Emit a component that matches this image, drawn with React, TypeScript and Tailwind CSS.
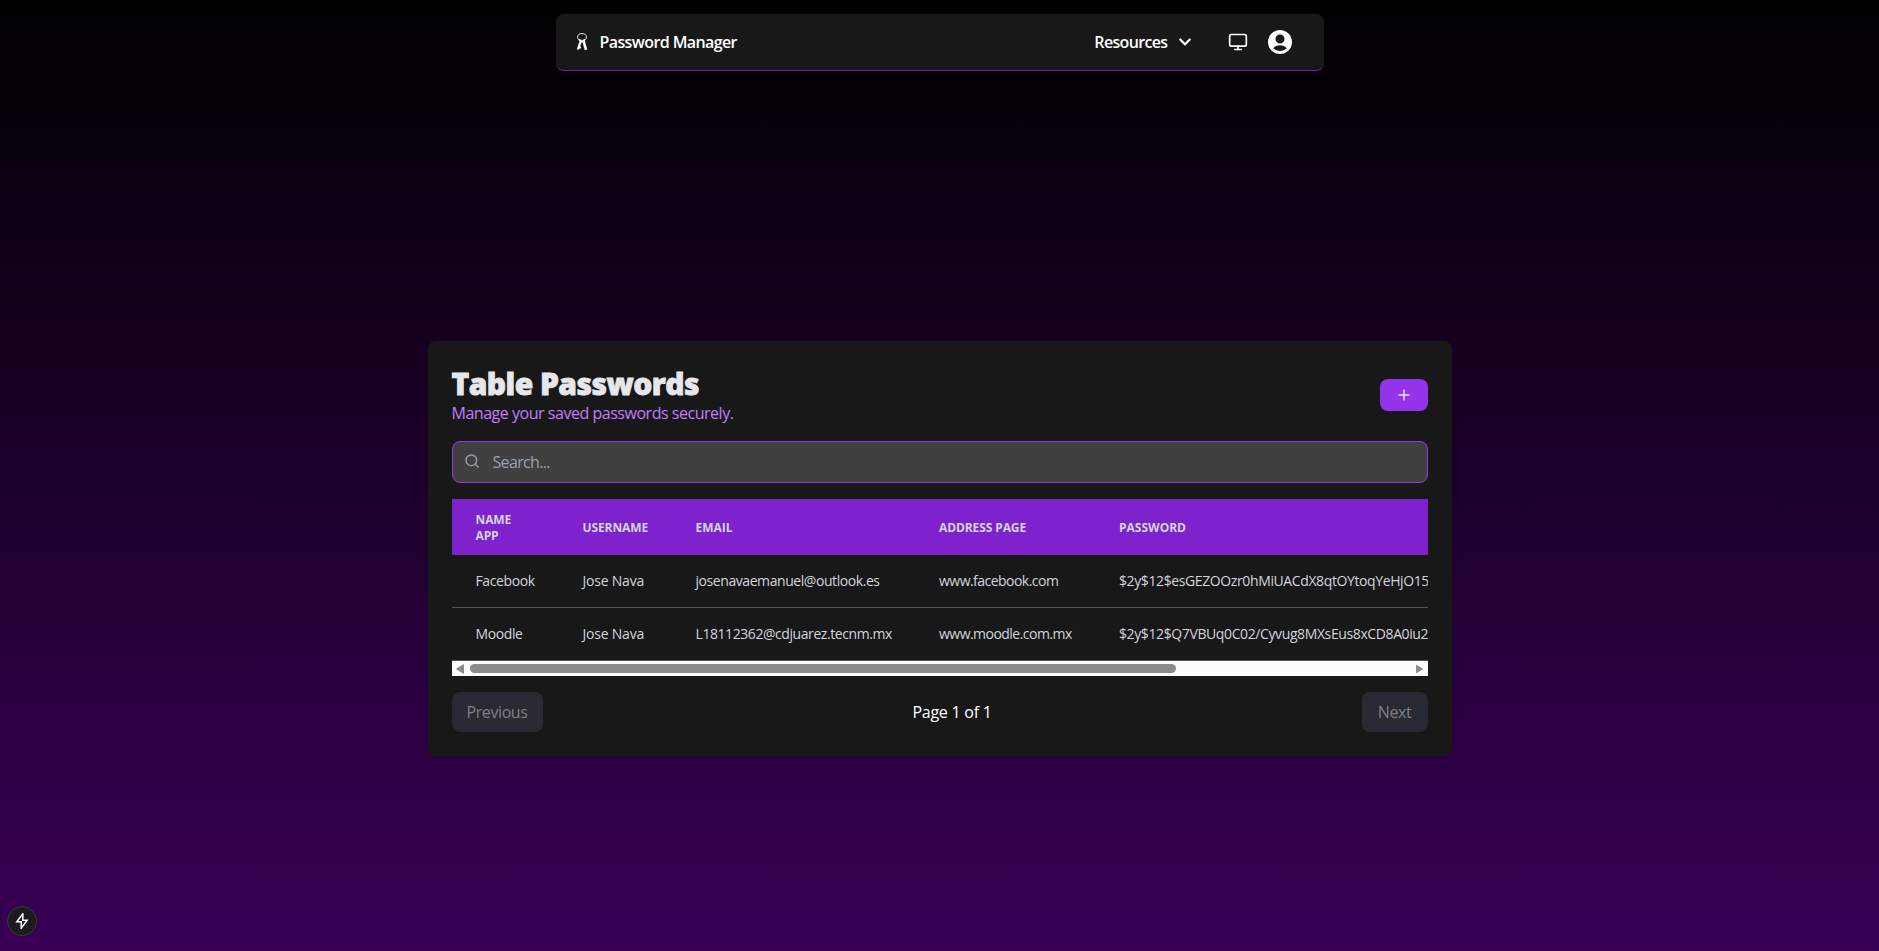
import { Monitor, Search } from "lucide-react";
import { FaChevronDown } from "react-icons/fa";

const columns = [
  { label: "NAME APP", width: "w-[107px]", tracking: "tracking-[-0.1px]" },
  { label: "USERNAME", width: "w-[113px]", tracking: "tracking-[-0.1px]" },
  { label: "EMAIL", width: "w-[243.500px]", tracking: "tracking-[0px]" },
  { label: "ADDRESS PAGE", width: "w-[180px]", tracking: "tracking-[-0.1px]" },
  { label: "PASSWORD", width: "w-[700px]", tracking: "tracking-[0px]" },
];

const rows = [
  ["Facebook", "Jose Nava", "josenavaemanuel@outlook.es", "www.facebook.com", "$2y$12$esGEZOOzr0hMiUACdX8qtOYtoqYeHjO15"],
  ["Moodle", "Jose Nava", "L18112362@cdjuarez.tecnm.mx", "www.moodle.com.mx", "$2y$12$Q7VBUq0C02/Cyvug8MXsEus8xCD8A0iu2"],
];

const cellTracking = [
  "tracking-[-0.4px]",
  "tracking-[-0.22px]",
  "tracking-[-0.43px]",
  "tracking-[-0.53px]",
  "tracking-[-0.39px]",
];

function KeysIcon() {
  return (
    <svg viewBox="0 0 12 18" className="h-[18px] w-3 fill-none stroke-white">
      <ellipse cx="6" cy="4" rx="4.400" ry="3.400" strokeWidth="0.900" />
      <path d="M4.800 8.200 1.800 16.500M3 12.800l1.300 2.600" strokeWidth="2.200" />
      <path d="M7.600 8.200 10 16.800" strokeWidth="2.600" />
      <path d="M2.800 6.300l3.600 2.900M9 6.300l-3.200 2.900" strokeWidth="1.600" />
    </svg>
  );
}

function Navbar() {
  return (
    <nav className="flex h-[57px] w-[768px] shrink-0 items-center rounded-lg border-b border-[#6b21a8] bg-[#181818] pr-8 pl-5 text-white">
      <KeysIcon />
      <span className="ml-3 text-[16px] font-semibold tracking-[-0.6px]">Password Manager</span>
      <span className="ml-auto text-[16px] font-semibold tracking-[-0.65px]">Resources</span>
      <FaChevronDown className="ml-[10px] size-[14px]" />
      <Monitor className="ml-[36px] size-5" strokeWidth={2} />
      <svg viewBox="0 0 24 24" className="ml-[20px] size-6" fill="currentColor">
        <path fillRule="evenodd" d="M12 0a12 12 0 1 0 0 24 12 12 0 0 0 0-24Zm0 4.500a4.500 4.500 0 1 1 0 9 4.500 4.500 0 0 1 0-9Zm-6.800 13.800c1.500-2 4.100-3.100 6.800-3.100s5.300 1.100 6.800 3.100A9 9 0 0 1 12 21a9 9 0 0 1-6.800-2.700Z" />
      </svg>
    </nav>
  );
}

function PasswordTable() {
  return (
    <div className="mt-4 w-full overflow-hidden">
      <div className="flex h-14 w-max items-center bg-[#7e22ce] pt-px text-[12px] leading-4 font-bold text-gray-300">
        {columns.map((c) => (
          <div key={c.label} className={`shrink-0 pr-12 pl-6 ${c.width} ${c.tracking}`}>
            {c.label}
          </div>
        ))}
      </div>
      {rows.map((row) => (
        <div key={row[0]} className="flex h-[53px] w-max items-center border-b border-[#525252] text-[14px] leading-5 text-gray-300">
          {row.map((cell, i) => (
            <div key={i} className={`shrink-0 pl-6 whitespace-nowrap ${cellTracking[i]} ${columns[i].width}`}>
              {cell}
            </div>
          ))}
        </div>
      ))}
      <div className="flex h-[15px] items-center bg-[#fcfcfc] px-1">
        <svg viewBox="0 0 8 10" className="h-[10px] w-2 fill-[#8b8b8b]">
          <path d="M7 0.500Q8 0 8 1V9Q8 10 7 9.500L0.500 5.600Q0 5 0.500 4.400Z" />
        </svg>
        <div className="ml-[6px] h-[9px] w-[706px] rounded-full bg-[#8b8b8b]" />
        <svg viewBox="0 0 8 10" className="mr-px ml-auto h-[10px] w-[7px] fill-[#8b8b8b]">
          <path d="M1 0.500Q0 0 0 1V9Q0 10 1 9.500L7.500 5.600Q8 5 7.500 4.400Z" />
        </svg>
      </div>
    </div>
  );
}

export default function App() {
  return (
    <div className="relative flex h-[951px] w-full flex-col items-center overflow-hidden bg-linear-to-b/srgb from-black to-[#390056] pt-[14px] font-['Open_Sans',sans-serif]">
      <Navbar />
      <main className="mt-[270px] flex h-[415px] w-[1024px] flex-col rounded-lg bg-[#181818] p-6 shadow-lg">
        <header className="mb-4 flex h-[60px] items-center justify-between">
          <div>
            <h1 className="pt-px text-[30px] leading-[35px] font-extrabold tracking-[-0.55px] text-gray-200 [-webkit-text-stroke:0.8px_#e5e7eb]">Table Passwords</h1>
            <p className="text-[16px] leading-6 tracking-[-0.47px] text-purple-400">Manage your saved passwords securely.</p>
          </div>
          <button className="flex h-8 w-12 items-center justify-center rounded-lg bg-[#9333ea]">
            <svg viewBox="0 0 12 12" className="size-3 stroke-gray-200" strokeWidth="1.500">
              <path d="M6 0.500v11M0.500 6h11" />
            </svg>
          </button>
        </header>
        <div className="flex h-[42px] shrink-0 items-center rounded-lg border border-[#9333ea] bg-[#404040] pl-[11px] text-gray-400">
          <Search className="mb-[3px] size-4" strokeWidth={2} />
          <span className="ml-[13px] text-[16px] tracking-[-0.65px]">Search...</span>
        </div>
        <PasswordTable />
        <footer className="mt-4 flex h-10 items-center justify-between text-[16px] tracking-[-0.42px]">
          <button className="h-10 w-[91px] rounded-lg bg-[#282b33] text-[#808080]">Previous</button>
          <span className="tracking-[-0.25px] text-white">Page 1 of 1</span>
          <button className="h-10 w-[66px] rounded-lg bg-[#282b33] text-[#808080]">Next</button>
        </footer>
      </main>
      <div className="absolute bottom-[15px] left-[7px] flex size-[30px] items-center justify-center rounded-full border border-[#3a3a3a] bg-[#1b1b1e]">
        <svg viewBox="0 0 16 16" className="size-4 fill-none stroke-white" strokeWidth="1.500">
          <path d="M8.800 0.800 2.800 8.800H7.200V15.200L13.200 7.200H8.800Z" />
        </svg>
      </div>
    </div>
  );
}
